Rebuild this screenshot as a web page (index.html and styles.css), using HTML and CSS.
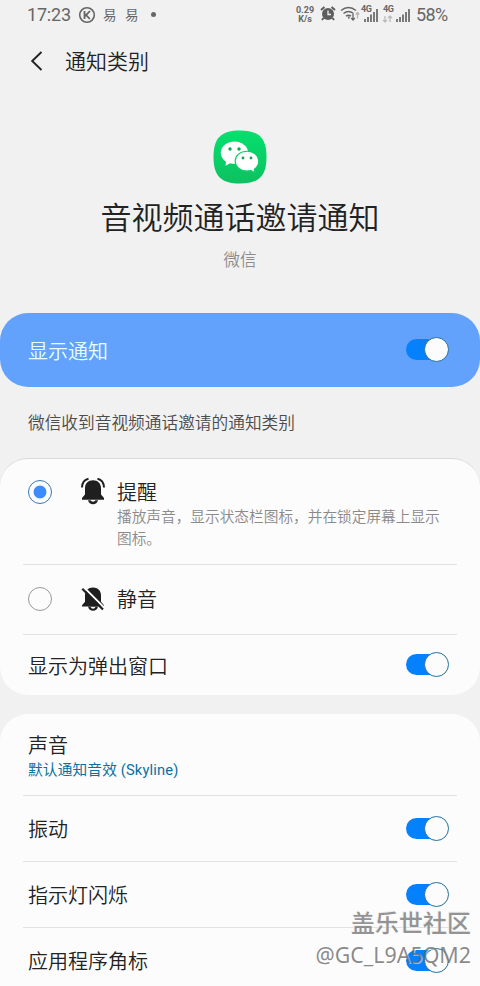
FILE: index.html
```html
<!DOCTYPE html>
<html lang="zh-CN">
<head>
<meta charset="utf-8">
<title>通知类别</title>
<link rel="stylesheet" href="styles.css">
</head>
<body>
<div class="screen">
  <div class="status">
    <span class="clock">17:23</span>
    <svg class="k-icon" width="18" height="18" viewBox="0 0 18 18"><circle cx="9" cy="9" r="7.3" fill="none" stroke="#666" stroke-width="1.6"/><path d="M6.5 5v8M12 5L8.2 9l3.6 4M7 10l2-2" fill="none" stroke="#666" stroke-width="1.8"/></svg>
    <span class="yi">易</span>
    <span class="yi second">易</span>
    <span class="dot"></span>
    <div class="status-right">
      <span class="speed"><span>0.29</span><span>K/s</span></span>
      <svg class="alarm" width="16" height="16" viewBox="0 0 16 16"><circle cx="8" cy="8" r="6" fill="#5d5d5d"/><path d="M1 4L4.500 1M11.500 1L15 4M3.500 12L2 14M12.500 12L14 14" stroke="#5d5d5d" stroke-width="2"/><path d="M8 4.500v4h3" fill="none" stroke="#f1f1f1" stroke-width="1.300"/></svg>
      <svg class="wifi" width="20" height="16" viewBox="0 0 20 16"><path d="M1 4.500Q8.500-1.500 16 4.500M3.500 7.500Q8.500 3.500 13.500 7.500M6 10.200Q8.500 8.200 11 10.200" fill="none" stroke="#666" stroke-width="1.600"/><path d="M7.500 10.500h2.500l-1 3z" fill="#666"/><path d="M13 8v6M11.200 12l1.800 2 1.800-2" fill="none" stroke="#666" stroke-width="1.300"/><path d="M17.500 12.500v-6M15.700 8.500l1.800-2 1.800 2" fill="none" stroke="#b5b5b5" stroke-width="1.300"/></svg>
      <span class="signal"><svg width="18" height="16" viewBox="0 0 18 16"><path d="M5 15v-3M8 15V10M11 15V7.500M14 15V5M17 15V2" stroke="#666" stroke-width="1.700"/></svg><span class="net">4G</span></span>
      <span class="signal wide"><svg width="28" height="16" viewBox="0 0 28 16"><path d="M3 9v6M1 13l2 2 2-2M8 15V9M6 11l2-2 2 2" fill="none" stroke="#b8b8b8" stroke-width="1.200"/><path d="M15 15v-3M18 15V10M21 15V7.500M24 15V5M27 15V2" stroke="#666" stroke-width="1.700"/></svg><span class="net">4G</span></span>
      <span class="battery">58%</span>
    </div>
  </div>

  <header class="header">
    <svg width="14" height="20" viewBox="0 0 14 20"><path d="M12.500 1L3.200 10L12.500 19" fill="none" stroke="#222" stroke-width="1.900"/></svg>
    <h1>通知类别</h1>
  </header>

  <section class="hero">
    <svg width="54" height="54" viewBox="0 0 54 54">
      <defs><linearGradient id="green" x1="0" y1="0" x2="0" y2="1"><stop offset="0" stop-color="#05e06e"/><stop offset="1" stop-color="#0cc160"/></linearGradient></defs>
      <path d="M27 .5C46 .5 53.500 8 53.500 27S46 53.500 27 53.500.5 46 .5 27 8 .5 27 .5z" fill="url(#green)"/>
      <path d="M21.500 11.500c-7.800 0-13.700 5-13.700 11.300 0 3.700 2 6.800 5.200 8.900l-.5 4 4.700-2.500c1.400.4 2.800.6 4.300.6 7.700 0 13.700-5 13.700-11s-6-11.300-13.700-11.300z" fill="#fff"/>
      <path d="M34 21.300c-6.800 0-11.800 4.400-11.800 9.800S27.200 41 34 41c1.400 0 2.700-.2 4-.5l4 2.200-.7-3.500c2.800-1.800 4.500-4.800 4.500-8.100 0-5.400-5-9.800-11.800-9.800z" fill="#fff" stroke="#0bce66" stroke-width="1.100"/>
      <circle cx="17" cy="19" r="1.700" fill="#0ba853"/><circle cx="26" cy="19" r="1.700" fill="#0ba853"/><circle cx="30" cy="28" r="1.400" fill="#0ba853"/><circle cx="38" cy="28" r="1.400" fill="#0ba853"/>
    </svg>
    <h2>音视频通话邀请通知</h2>
    <p>微信</p>
  </section>

  <div class="master"><span class="label">显示通知</span><span class="toggle"><i></i></span></div>
  <p class="description">微信收到音视频通话邀请的通知类别</p>

  <section class="card modes">
    <div class="option alert">
      <span class="radio on"></span>
      <svg class="bell" width="26" height="28" viewBox="0 0 26 28"><path d="M13 3.200C17.800 3.200 21 6.500 21 11V17.500L24 21V22.700H2V21L5 17.500V11C5 6.500 8.200 3.200 13 3.200z" fill="#1f1f1f"/><path d="M8 23.200H18C17.300 25.800 15.500 27.200 13 27.200S8.700 25.800 8 23.200z" fill="#1f1f1f"/><path d="M10.500 23h5q-.8 1.800-2.500 1.800t-2.500-1.800z" fill="#fcfcfc"/><path d="M8.500 1.700Q2.200 3.200 2 10.500M17.500 1.700Q23.800 3.200 24 10.500" fill="none" stroke="#1f1f1f" stroke-width="2"/></svg>
      <div class="copy"><b>提醒</b><p>播放声音，显示状态栏图标，并在锁定屏幕上显示图标。</p></div>
    </div>
    <div class="option silent">
      <span class="radio"></span>
      <svg class="bell" width="26" height="28" viewBox="0 0 26 28"><path d="M13 2.400C17.800 2.400 21 5.700 21 10.200V16.700L24 20.200V21.500H2V20.200L5 16.700V10.200C5 5.700 8.200 2.400 13 2.400z" fill="#1f1f1f"/><path d="M8 21.500H18C17.300 24.500 15.500 25.700 13 25.700S8.700 24.500 8 21.500z" fill="#1f1f1f"/><path d="M10.500 22h5q-.8 1.700-2.500 1.700t-2.500-1.700z" fill="#fcfcfc"/><path d="M4 2.500L24.500 23" stroke="#fcfcfc" stroke-width="2"/><path d="M2.300 3.700L23 24.500" stroke="#1f1f1f" stroke-width="2.200"/></svg>
      <div class="copy"><b>静音</b></div>
    </div>
    <div class="row popup"><b class="label">显示为弹出窗口</b><span class="toggle"><i></i></span></div>
  </section>

  <section class="card settings">
    <div class="sound"><b>声音</b><p>默认通知音效 (Skyline)</p></div>
    <div class="row"><b>振动</b><span class="toggle"><i></i></span></div>
    <div class="row"><b>指示灯闪烁</b><span class="toggle"><i></i></span></div>
    <div class="row"><b>应用程序角标</b><span class="toggle"><i></i></span></div>
  </section>

  <div class="watermark"><strong>盖乐世社区</strong><span>@GC_L9A5QM2</span></div>
</div>
</body>
</html>
```
FILE: styles.css
```css
* { box-sizing: border-box; }
body, h1, h2, p { margin: 0; }
body { background: #f1f1f1; color: #222; font-family: Roboto, "Noto Sans CJK SC", sans-serif; }
h1, h2, b { font-weight: 350; }
svg { display: block; flex: none; }
.screen { position: relative; width: 480px; height: 986px; overflow: hidden; }

.status { height: 30px; padding: 0 32px 0 27px; display: flex; align-items: center; color: #666; }
.clock { width: 44px; margin-right: 7px; font-size: 18px; line-height: 30px; letter-spacing: -.2px; }
.yi { width: 13px; margin-left: 7px; font-size: 13.5px; line-height: 26px; }
.yi.second { margin-left: 9px; }
.dot { width: 5px; height: 5px; margin: -2px 0 0 13px; border-radius: 50%; background: #666; }
.status-right { margin-left: auto; display: flex; align-items: center; }
.speed { width: 20px; display: flex; flex-direction: column; align-items: center; font-size: 9px; line-height: 9px; font-weight: 700; white-space: nowrap; }
.alarm { margin: -2px 0 0 5px; }
.wifi { margin: -2px 0 0 4px; }
.signal { position: relative; margin-left: 0; }
.signal.wide { margin-left: 4px; }
.net { position: absolute; left: 1px; top: -2px; font-size: 9px; line-height: 9px; font-weight: 700; background: #f1f1f1; letter-spacing: -.4px; }
.battery { width: 32px; margin-left: 6px; font-size: 18px; line-height: 30px; letter-spacing: -.6px; }

.header { height: 62px; padding-left: 29px; display: flex; align-items: center; }
.header h1 { margin: 2px 0 0 22px; font-size: 21px; line-height: 30px; }

.hero { height: 221px; padding-top: 38px; display: flex; flex-direction: column; align-items: center; }
.hero h2 { margin-top: 12px; font-size: 31px; line-height: 46px; }
.hero p { margin-top: 7px; font-size: 16.5px; line-height: 24px; font-weight: 350; color: #8c8c8c; }

.master { height: 74px; padding: 0 31px 1px 28px; display: flex; align-items: center; justify-content: space-between; border-radius: 28px; background: #63a2fc; color: #e6ffff; font-size: 20px; font-weight: 350; }
.label { padding-top: 2px; }
.toggle { position: relative; width: 43px; height: 25px; flex: none; display: flex; justify-content: flex-end; }
.toggle::before { content: ""; width: 32px; height: 21px; margin: 2px -14px 0 0; border-radius: 11px 0 0 11px; background: #0581fe; }
.toggle i { z-index: 1; width: 25px; height: 25px; flex: none; border: 1px solid #20709f; border-radius: 50%; background: #fcfcfc; }
.description { height: 71px; padding-left: 28px; font-size: 16.7px; line-height: 73px; font-weight: 350; color: #4c4c4c; }

.card { background: #fcfcfc; border-radius: 28px; font-size: 20px; }
.modes { height: 237px; border-top: 1px solid #d9d9d9; }
.option, .row, .sound { margin: 0 23px; border-bottom: 1px solid #e2e2e2; }
.option { padding-left: 5px; display: flex; }
.alert { height: 106px; padding-top: 18px; }
.silent { height: 70px; padding-top: 19px; }
.radio { width: 24px; height: 24px; margin-top: 3px; flex: none; border: 1px solid #999; border-radius: 50%; }
.radio.on { border-color: #3878b5; background: radial-gradient(circle, #3d8cff 6px, transparent 6.8px); }
.bell { margin-left: 28px; }
.silent .bell { margin-top: 1px; }
.copy { margin-left: 11px; }
.copy b { display: block; padding-top: 1px; line-height: 30px; }
.copy p { width: 326px; margin-top: -2px; font-size: 14.68px; line-height: 22px; font-weight: 350; color: #8a8a8a; }
.row { height: 66px; padding: 0 8px 1px 5px; display: flex; align-items: center; justify-content: space-between; }
.row:last-child { border-bottom: 0; }
.popup { height: 60px; }
.settings { margin-top: 19px; height: 300px; }
.sound { height: 82px; padding: 18px 0 0 5px; }
.sound b { display: block; line-height: 29px; }
.sound p { margin-top: -1px; font-size: 14.7px; line-height: 21px; letter-spacing: .15px; color: #0870a2; }

.watermark { position: absolute; right: 9px; bottom: 16px; z-index: 2; display: flex; flex-direction: column; align-items: flex-end; color: rgba(105, 105, 105, .78); white-space: nowrap; }
.watermark strong { font-size: 24px; line-height: 32px; font-weight: 500; color: rgba(110, 110, 110, .72); text-shadow: -1px -1px 0 rgba(235, 235, 235, .75); }
.watermark span { font-family: "Noto Sans", sans-serif; font-size: 21.4px; line-height: 30px; font-weight: 400; text-shadow: 1px 1px 0 rgba(255, 255, 255, .5); }
```
